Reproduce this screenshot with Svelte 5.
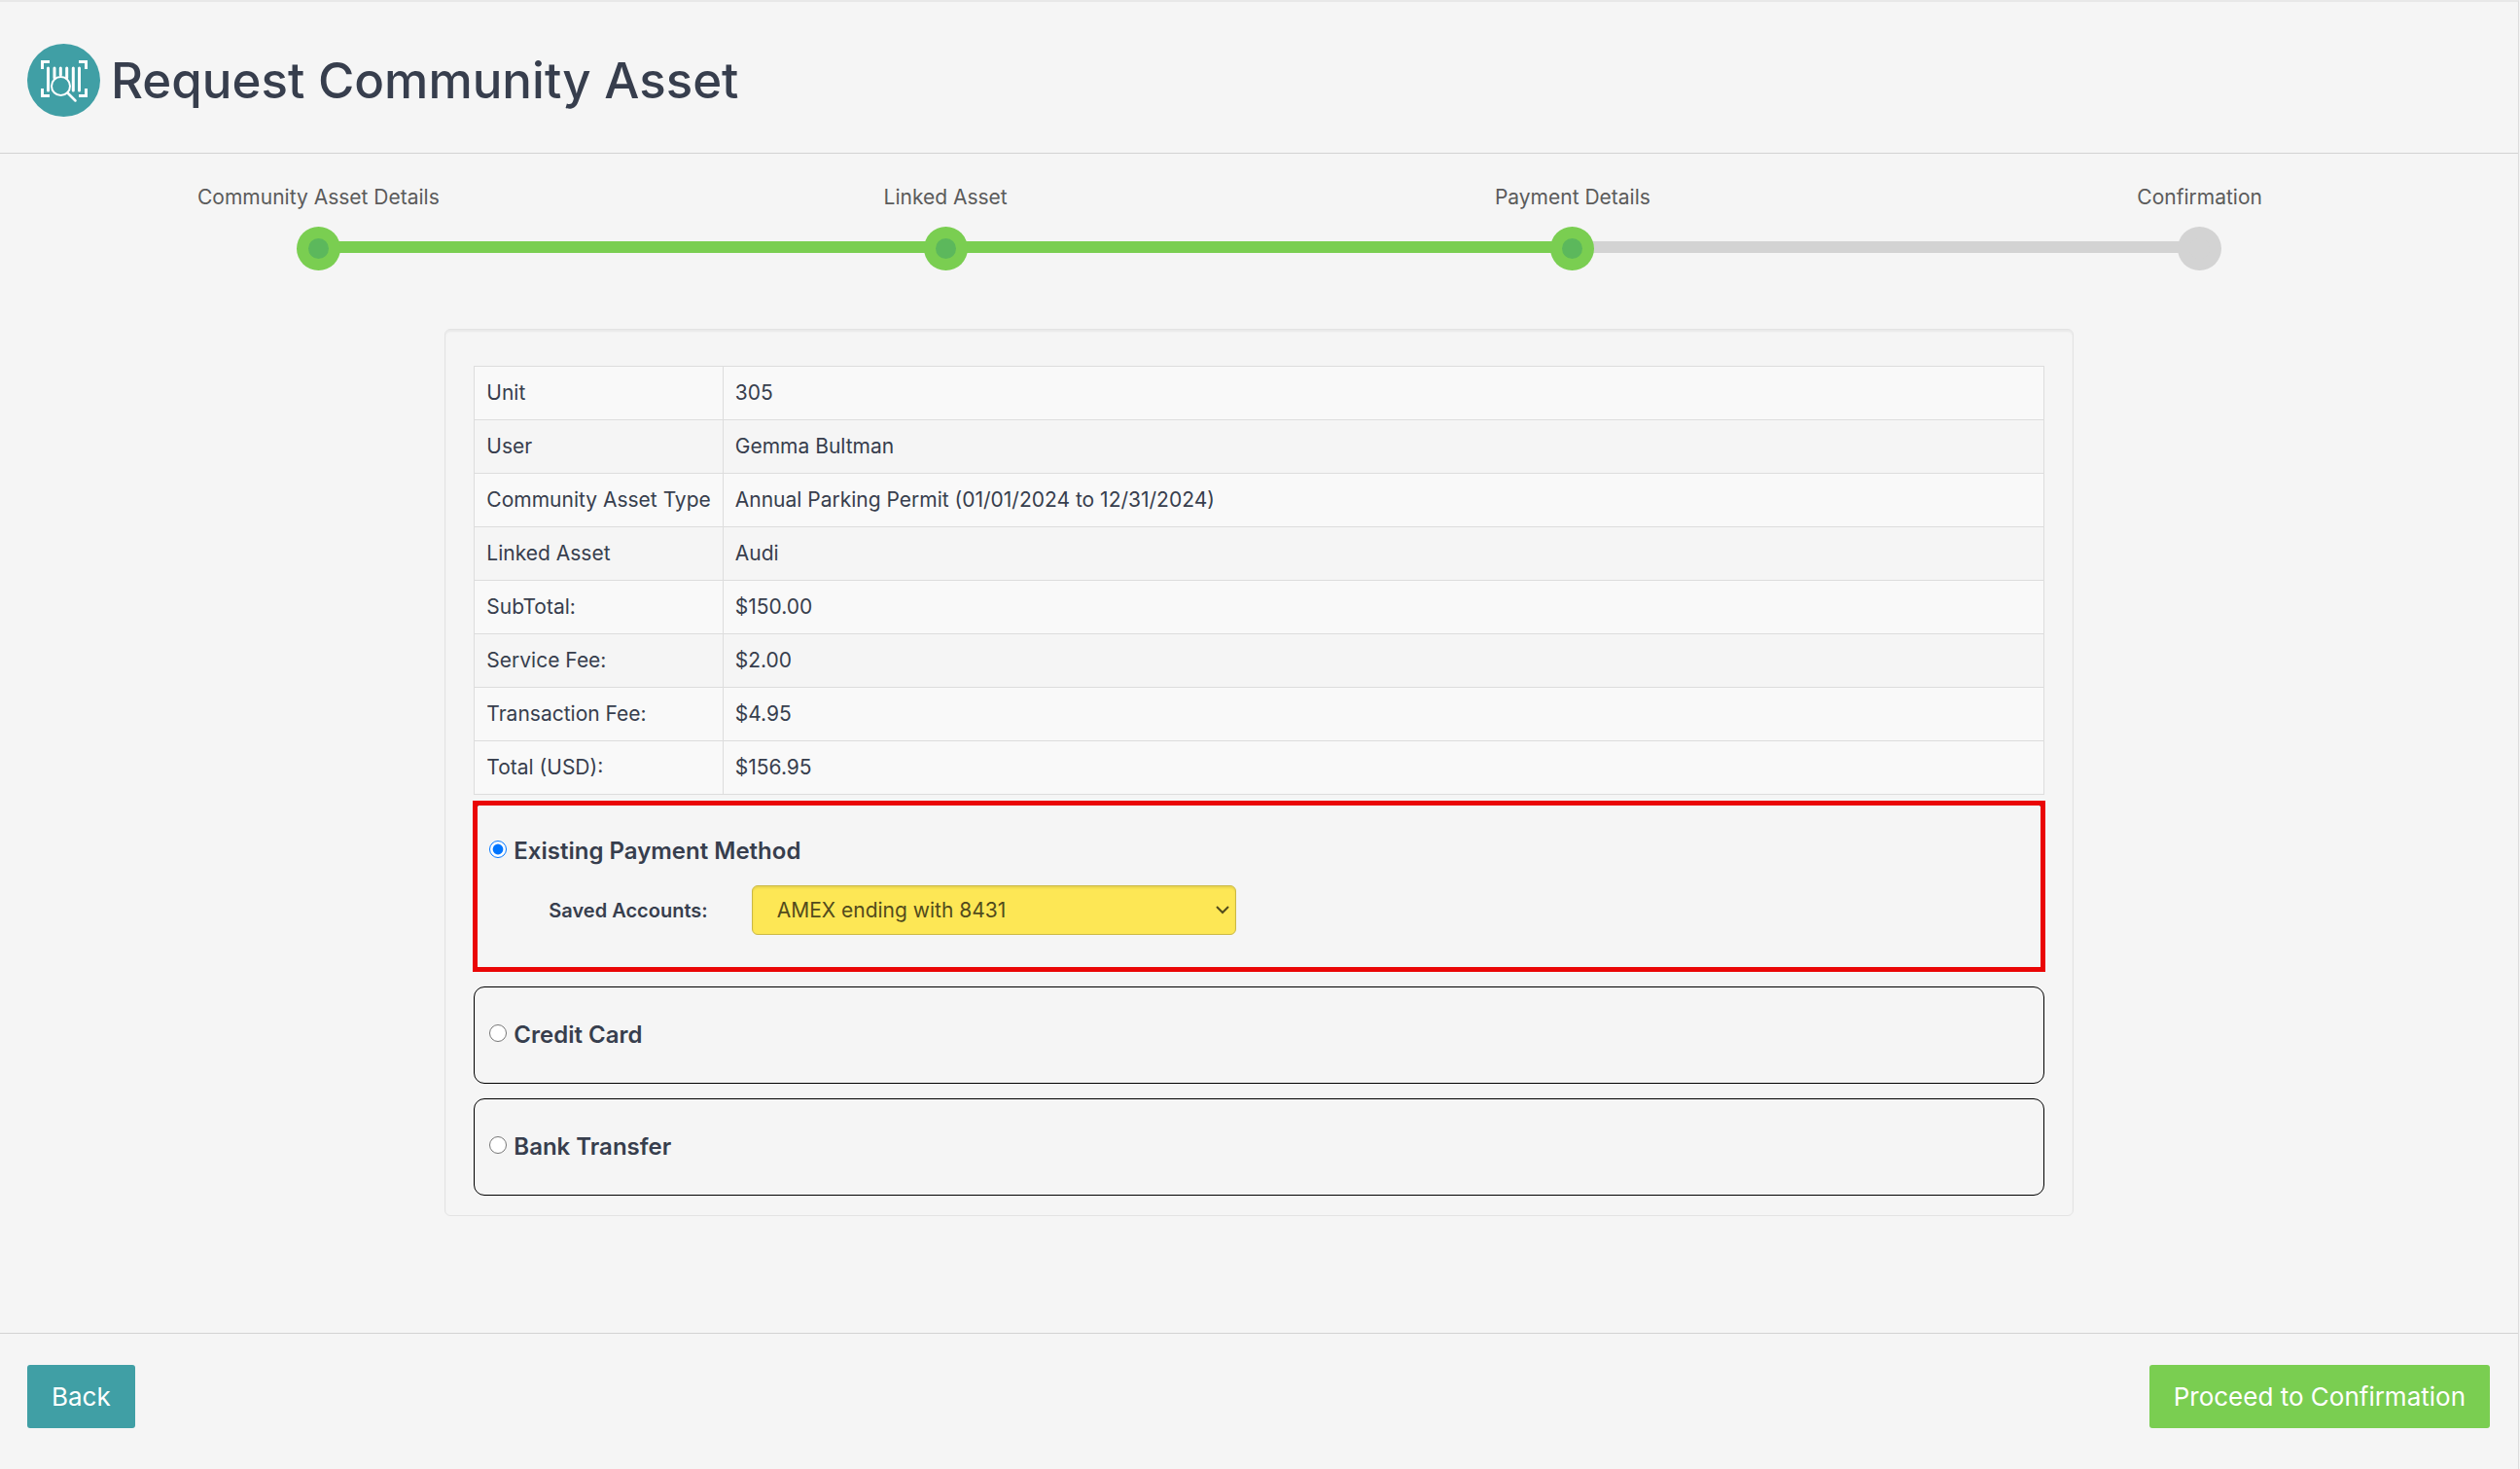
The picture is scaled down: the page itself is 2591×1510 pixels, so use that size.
<script>
	const steps = [
		{ label: 'Community Asset Details', state: 'done' },
		{ label: 'Linked Asset', state: 'done' },
		{ label: 'Payment Details', state: 'current' },
		{ label: 'Confirmation', state: 'todo' }
	];

	const summary = [
		['Unit', '305'],
		['User', 'Gemma Bultman'],
		['Community Asset Type', 'Annual Parking Permit (01/01/2024 to 12/31/2024)'],
		['Linked Asset', 'Audi'],
		['SubTotal:', '$150.00'],
		['Service Fee:', '$2.00'],
		['Transaction Fee:', '$4.95'],
		['Total (USD):', '$156.95']
	];

	const methods = [
		{ value: 'existing', label: 'Existing Payment Method' },
		{ value: 'card', label: 'Credit Card' },
		{ value: 'bank', label: 'Bank Transfer' }
	];

	const accounts = ['AMEX ending with 8431'];

	let method = $state('existing');
	let account = $state(accounts[0]);
</script>

<main class="page">
	<header class="page-header">
		<svg class="page-icon" viewBox="0 0 75 75" aria-hidden="true">
			<circle cx="37.5" cy="37.5" r="37.5" fill="#409fa5" />
			<g fill="none" stroke="#fff" stroke-width="3">
				<path d="M15.5 26V18.5H23M53 18.5h7.5V26M15.5 46v7.5H23M53 53.5h7.5V46" />
				<path
					d="M21.5 25v23M53.5 25v23M47.3 25v23M28 25v10M34.3 25v7M40.7 25v10"
					stroke-linecap="round"
				/>
				<circle cx="34.5" cy="43.5" r="9.5" stroke-width="2" />
				<path d="M41.5 50.5l8 8" stroke-width="2.5" stroke-linecap="round" />
			</g>
		</svg>
		<h1>Request Community Asset</h1>
	</header>

	<div class="content">
		<ol class="steps">
			{#each steps as step}
				<li class="step {step.state}">
					<span class="step-label">{step.label}</span>
					<span class="step-track"><span class="step-dot"></span></span>
				</li>
			{/each}
		</ol>

		<section class="panel">
			<table>
				<tbody>
					{#each summary as [name, value]}
						<tr>
							<th scope="row">{name}</th>
							<td>{value}</td>
						</tr>
					{/each}
				</tbody>
			</table>

			{#each methods as item}
				<div class="method" class:highlighted={item.value === 'existing'}>
					<label class="method-title">
						<input type="radio" name="method" value={item.value} bind:group={method} />
						<span>{item.label}</span>
					</label>
					{#if item.value === 'existing' && method === 'existing'}
						<div class="account-row">
							<label for="account">Saved Accounts:</label>
							<div class="select-wrap">
								<select id="account" bind:value={account}>
									{#each accounts as option}
										<option>{option}</option>
									{/each}
								</select>
								<svg class="chevron" viewBox="0 0 14 9" aria-hidden="true">
									<path d="M1 1l6 6 6-6" fill="none" stroke="#524b1c" stroke-width="2" />
								</svg>
							</div>
						</div>
					{/if}
				</div>
			{/each}
		</section>
	</div>

	<footer class="page-footer">
		<button type="button" class="btn back">Back</button>
		<button type="button" class="btn proceed">Proceed to Confirmation</button>
	</footer>
</main>

<style>
	:global(body) {
		background: #f5f5f5;
	}

	.page {
		box-sizing: border-box;
		min-height: 100vh;
		margin-right: 1px;
		border-top: 2px solid #e8e8e8;
		border-right: 1px solid #dcdcdc;
		color: #373e4d;
		font-family: Inter, 'Liberation Sans', sans-serif;
		font-size: 21px;
		line-height: 30px;
	}

	.page-header {
		display: flex;
		align-items: center;
		gap: 11px;
		padding: 43px 28px 37px;
		border-bottom: 1px solid #d3d3d3;
	}

	.page-icon {
		width: 75px;
		height: 75px;
	}

	h1 {
		margin: 0;
		font-size: 51px;
		font-weight: 500;
		line-height: 60px;
	}

	.content {
		padding: 30px 5px 120px;
	}

	.steps {
		display: grid;
		grid-template-columns: repeat(4, 1fr);
		margin: 0 0 60px;
		padding: 0;
		list-style: none;
	}

	.step {
		color: #5b5b5b;
		text-align: center;
	}

	.step-label {
		display: block;
		margin-bottom: 15px;
	}

	.step-track {
		position: relative;
		display: flex;
		justify-content: center;
	}

	/* Connector from this dot to the next one */
	.step:not(:last-child) .step-track::before {
		content: '';
		position: absolute;
		top: 15px;
		left: 50%;
		width: 100%;
		height: 12px;
		background: #d3d3d3;
	}

	.step.done:not(:last-child) .step-track::before {
		background: #7ace51;
	}

	.step-dot {
		position: relative;
		z-index: 1;
		display: grid;
		place-items: center;
		width: 45px;
		height: 45px;
		border-radius: 50%;
		background: #7ace51;
	}

	.step-dot::after {
		content: '';
		width: 21px;
		height: 21px;
		border-radius: 50%;
		background: #5cb85c;
	}

	.todo .step-dot,
	.todo .step-dot::after {
		background: #d3d3d3;
	}

	.panel {
		box-sizing: border-box;
		width: calc(65% - 2px);
		margin: 0 auto;
		padding: 37px 29px 20px;
		border: 1px solid #e3e3e3;
		border-radius: 6px;
		box-shadow: inset 0 2px 2px rgba(0, 0, 0, 0.05);
	}

	table {
		width: 100%;
		margin-bottom: 8px;
		border-collapse: collapse;
	}

	th,
	td {
		padding: 12px;
		border: 1px solid #dddddd;
		font-weight: 400;
		text-align: left;
	}

	th {
		width: 230px;
		white-space: nowrap;
	}

	tr:nth-child(odd),
	tr:last-child {
		background: #f9f9f9;
	}

	.method {
		position: relative;
		margin-bottom: 15px;
		padding: 34px 15px;
		border: 1px solid #000;
		border-radius: 11px;
	}

	.method:last-child {
		margin-bottom: 0;
	}

	.highlighted::after {
		content: '';
		position: absolute;
		inset: -3px -2px -1px;
		border: 5px solid #ea0606;
		pointer-events: none;
	}

	.method-title {
		display: flex;
		align-items: center;
		gap: 7px;
		font-size: 24px;
		font-weight: 600;
	}

	.method-title input {
		width: 18px;
		height: 18px;
		margin: 0 0 5px;
	}

	.account-row {
		display: flex;
		align-items: center;
		gap: 45px;
		margin: 20px 0 3px 61px;
		font-size: 20px;
		font-weight: 600;
	}

	.select-wrap {
		position: relative;
		flex: 0 1 498px;
	}

	select {
		box-sizing: border-box;
		display: block;
		width: 100%;
		height: 51px;
		padding: 0 36px 0 25px;
		border: 1px solid #cbb944;
		border-radius: 6px;
		appearance: none;
		background: #fde755;
		box-shadow: inset 0 2px 2px rgba(0, 0, 0, 0.08);
		color: #524b1c;
		font: inherit;
		font-size: 21px;
		font-weight: 400;
	}

	.chevron {
		position: absolute;
		top: 21px;
		right: 7px;
		width: 14px;
		height: 9px;
		pointer-events: none;
	}

	.page-footer {
		display: flex;
		justify-content: space-between;
		padding: 32px 29px 42px 28px;
		border-top: 1px solid #d3d3d3;
	}

	.btn {
		padding: 14px 25px;
		border: 0;
		border-radius: 3px;
		color: #fff;
		font-family: inherit;
		font-size: 26px;
		line-height: 37px;
		cursor: pointer;
	}

	.back {
		background: #409fa5;
	}

	.proceed {
		background: #7ace51;
	}
</style>
